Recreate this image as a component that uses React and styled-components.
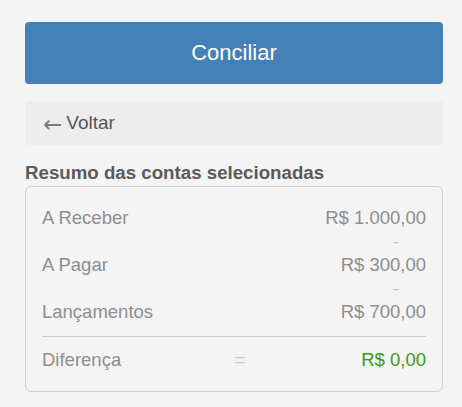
import React from 'react';
import styled, { createGlobalStyle } from 'styled-components';

const GlobalStyle = createGlobalStyle`
  body {
    margin: 0;
    background-color: #f4f4f4;
    font-family: "Liberation Sans", Arial, sans-serif;
  }
`;

const Page = styled.div`
  padding: 22px 19px 0 25px;
`;

const ConfirmButton = styled.button`
  display: block;
  width: 100%;
  height: 62px;
  border: none;
  border-radius: 4px;
  background-color: #4481b8;
  color: #fff;
  font-family: inherit;
  font-size: 22px;
  cursor: pointer;
`;

const BackButton = styled.button`
  display: flex;
  align-items: center;
  gap: 4px;
  width: 100%;
  height: 44px;
  margin-top: 17px;
  padding: 0 17px 0 18px;
  border: none;
  border-radius: 4px;
  background-color: #ededed;
  color: #555;
  font-family: inherit;
  font-size: 19px;
  cursor: pointer;
`;

const Arrow = styled.span`
  font-family: "DejaVu Sans", sans-serif;
  font-size: 23px;
  line-height: 1;
  margin-top: 3px;
  color: #7a7a7a;
`;

const Title = styled.h3`
  margin: 17px 0 2px;
  font-size: 18.7px;
  font-weight: bold;
  color: #5a5a5a;
  line-height: 22px;
`;

const SummaryBox = styled.div`
  border: 1px solid #cfcfcf;
  border-radius: 6px;
  padding: 19px 16px 20px;
`;

const Row = styled.div`
  display: flex;
  justify-content: space-between;
  align-items: center;
  font-size: 18.5px;
  line-height: 23.5px;
  color: #8e8e8e;
`;

const Operator = styled.div`
  text-align: ${(p) => (p.center ? 'center' : 'right')};
  padding: ${(p) => (p.center ? '0 0 0 12px' : '0 27px 0 0')};
  color: #c4c4c4;
  font-size: 18.5px;
  line-height: 23.5px;
  flex: ${(p) => (p.center ? '0 0 auto' : 'none')};
`;

const Divider = styled.hr`
  border: none;
  border-top: 1px solid #cdcdcd;
  margin: 12px 0 11px;
`;

const Cell = styled.span`
  flex: 1;
  text-align: ${(p) => (p.right ? 'right' : 'left')};
  color: ${(p) => (p.green ? '#3c9a14' : 'inherit')};
`;

export default function App() {
  return (
    <Page>
      <GlobalStyle />
      <ConfirmButton>Conciliar</ConfirmButton>
      <BackButton>
        <Arrow>←</Arrow>
        Voltar
      </BackButton>
      <Title>Resumo das contas selecionadas</Title>
      <SummaryBox>
        <Row>
          <Cell>A Receber</Cell>
          <Cell right>R$ 1.000,00</Cell>
        </Row>
        <Operator>-</Operator>
        <Row>
          <Cell>A Pagar</Cell>
          <Cell right>R$ 300,00</Cell>
        </Row>
        <Operator>-</Operator>
        <Row>
          <Cell>Lançamentos</Cell>
          <Cell right>R$ 700,00</Cell>
        </Row>
        <Divider />
        <Row>
          <Cell>Diferença</Cell>
          <Operator center>=</Operator>
          <Cell right green>R$ 0,00</Cell>
        </Row>
      </SummaryBox>
    </Page>
  );
}
